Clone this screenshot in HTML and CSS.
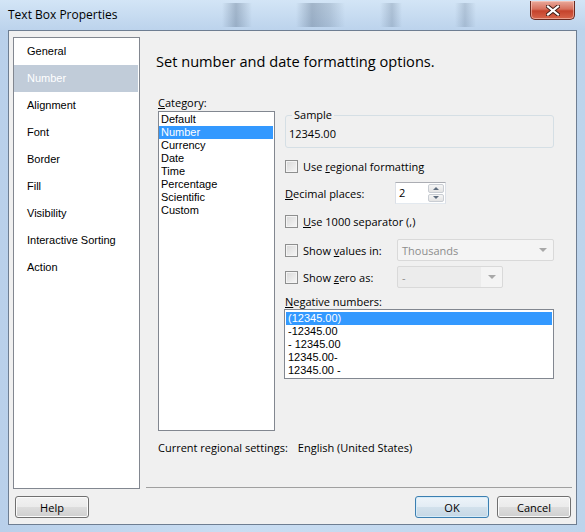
FILE: index.html
```html
<!DOCTYPE html>
<html lang="en">
<head>
  <meta charset="UTF-8" />
  <title>Text Box Properties</title>
  <link rel="stylesheet" href="styles.css">
</head>
<body>
  <div class="window">
    <div class="titlebar">
      <span class="title">Text Box Properties</span>
      <span class="close">
        <svg width="14" height="11" viewBox="0 0 14 11">
          <path d="M2 1.5 L12 9.5 M12 1.5 L2 9.5" stroke="#3b1a14" stroke-width="4" stroke-linecap="square"/>
          <path d="M2 1.5 L12 9.5 M12 1.5 L2 9.5" stroke="#fff" stroke-width="2.2" stroke-linecap="square"/>
        </svg>
      </span>
    </div>

    <div class="client">
      <div class="main">
        <ul class="nav">
          <li>General</li>
          <li class="selected">Number</li>
          <li>Alignment</li>
          <li>Font</li>
          <li>Border</li>
          <li>Fill</li>
          <li>Visibility</li>
          <li>Interactive Sorting</li>
          <li>Action</li>
        </ul>

        <div class="page">
          <h1>Set number and date formatting options.</h1>

          <div class="cols">
            <div class="cat">
              <div class="label"><u>C</u>ategory:</div>
              <ul class="list cat-list">
                <li>Default</li>
                <li class="selected">Number</li>
                <li>Currency</li>
                <li>Date</li>
                <li>Time</li>
                <li>Percentage</li>
                <li>Scientific</li>
                <li>Custom</li>
              </ul>
            </div>

            <div class="opts">
              <fieldset class="sample">
                <legend>Sample</legend>
                <div>12345.00</div>
              </fieldset>

              <div class="row r-regional">
                <span class="check"></span>
                <span>Use <u>r</u>egional formatting</span>
              </div>

              <div class="row r-decimal">
                <span class="field-label"><u>D</u>ecimal places:</span>
                <span class="spin">
                  <span class="spin-value">2</span>
                  <span class="spin-btns">
                    <span class="spin-btn"><i class="up"></i></span>
                    <span class="spin-btn"><i class="down"></i></span>
                  </span>
                </span>
              </div>

              <div class="row r-sep">
                <span class="check"></span>
                <span><u>U</u>se 1000 separator (,)</span>
              </div>

              <div class="row r-values">
                <span class="check"></span>
                <span class="check-label">Show <u>v</u>alues in:</span>
                <span class="combo combo-wide">
                  <span class="combo-text">Thousands</span>
                  <i class="down"></i>
                </span>
              </div>

              <div class="row r-zero">
                <span class="check"></span>
                <span class="check-label">Show <u>z</u>ero as:</span>
                <span class="combo combo-narrow">
                  <span class="combo-text">-</span>
                  <i class="down"></i>
                </span>
              </div>

              <div class="label neg-label"><u>N</u>egative numbers:</div>
              <ul class="list neg-list">
                <li class="selected">(12345.00)</li>
                <li>-12345.00</li>
                <li>- 12345.00</li>
                <li>12345.00-</li>
                <li>12345.00 -</li>
              </ul>
            </div>
          </div>

          <div class="regional">
            <span>Current regional settings:</span>
            <span>English (United States)</span>
          </div>

          <div class="separator"></div>
        </div>
      </div>

      <div class="footer">
        <button class="btn">Help</button>
        <span class="spacer"></span>
        <button class="btn btn-default">OK</button>
        <button class="btn">Cancel</button>
      </div>
    </div>
  </div>
</body>
</html>
```

FILE: styles.css
```css
body {
  margin: 0;
  width: 585px;
  height: 532px;
  overflow: hidden;
  font-family: 'Segoe UI', 'Open Sans', sans-serif;
  font-size: 11px;
  color: #000;
  background: #c2d7ee;
}

ul {
  margin: 0;
  padding: 0;
  list-style: none;
}

u {
  text-decoration: underline;
  text-underline-offset: 1px;
}

.window {
  display: flex;
  flex-direction: column;
  height: 532px;
  background: linear-gradient(to right, #b9d0ea, #c9ddf2 40%, #bdd4ec);
}

/* title bar, with the blurred windows behind the glass */
.titlebar {
  height: 30px;
  display: flex;
  align-items: flex-start;
  padding: 0 10px 0 8px;
  background:
    linear-gradient(to right,
      transparent 222px, rgba(70, 90, 115, 0.32) 236px, transparent 252px,
      transparent 296px, rgba(70, 90, 115, 0.34) 312px, rgba(70, 90, 115, 0.2) 330px, transparent 345px,
      transparent 380px, rgba(70, 90, 115, 0.24) 392px, transparent 402px,
      transparent 455px, rgba(70, 90, 115, 0.22) 465px, transparent 476px) 0 3px / 100% 24px no-repeat,
    linear-gradient(#d3e5f6, #bcd3ec);
}

.title {
  flex: 1;
  line-height: 30px;
  font-size: 12px;
  color: #000;
}

.close {
  width: 43px;
  height: 18px;
  margin-top: 1px;
  display: flex;
  align-items: center;
  justify-content: center;
  border: 1px solid #6a2a20;
  border-top: none;
  border-radius: 0 0 5px 5px;
  background: linear-gradient(#e9a99b, #d7705d 45%, #c5432c 55%, #d7654b);
  box-shadow: inset 0 0 0 1px rgba(255, 220, 210, 0.5);
}

.client {
  height: 493px;
  margin: 0 8px 7px;
  border: 1px solid #6e7e92;
  background: #f0f0f0;
  display: flex;
  flex-direction: column;
}

.main {
  display: flex;
  gap: 6px;
  padding: 6px 4px 0 4px;
}

/* left page list */
.nav {
  width: 125px;
  height: 450px;
  border: 1px solid #828790;
  background: #fff;
  font-family: 'Liberation Sans', Arial, sans-serif;
  font-size: 11px;
}

.nav li {
  height: 27px;
  line-height: 27px;
  padding-left: 13px;
}

.nav li.selected {
  margin-right: 1px;
  background: #c1ccd9;
  color: #fff;
}

.page {
  flex: 1;
  height: 452px;
  display: flex;
  flex-direction: column;
  padding-left: 10px;
}

h1 {
  margin: 14px 0 0;
  font-size: 14.6px;
  font-weight: normal;
  line-height: 20px;
}

.cols {
  display: flex;
  gap: 9px;
  margin-top: 24px;
  margin-left: 2px;
}

.label {
  line-height: 15px;
}

.cat {
  width: 117px;
}

.list {
  border: 1px solid #828790;
  background: #fff;
  font-family: 'Liberation Sans', Arial, sans-serif;
  font-size: 11px;
}

.list li {
  height: 13px;
  line-height: 13px;
  padding-left: 2px;
}

.list li.selected {
  background: #3399ff;
  color: #fff;
}

.cat-list {
  margin-top: 1px;
  height: 320px;
  padding: 1px 0 0 0;
  box-sizing: border-box;
}

.cat-list li {
  margin-right: 1px;
}

.opts {
  width: 270px;
}

.sample {
  margin: 12px 0 0 1px;
  padding: 3px 4px 6px 3px;
  border: 1px solid #d5dfe5;
  border-radius: 3px;
  width: 260px;
}

.sample legend {
  padding: 0 2px;
  margin-left: 3px;
  line-height: 16px;
}

.sample div {
  line-height: 15px;
}

.row {
  display: flex;
  align-items: center;
  margin-left: 1px;
}

.check {
  width: 11px;
  height: 11px;
  flex: none;
  margin-right: 5px;
  border: 1px solid #8e8f8f;
  background: linear-gradient(135deg, #d8d8d8, #f7f7f7);
  box-shadow: inset 0 0 0 1px #f4f4f4;
}

.r-regional { height: 14px; margin-top: 11px; }
.r-decimal  { height: 22px; margin-top: 9px; }
.r-sep      { height: 14px; margin-top: 10px; }
.r-values   { height: 22px; margin-top: 11px; }
.r-zero     { height: 22px; margin-top: 5px; }

.field-label {
  width: 110px;
}

.check-label {
  width: 94px;
}

.spin {
  width: 49px;
  height: 20px;
  display: flex;
  border: 1px solid #dbdfe6;
  border-top-color: #abadb3;
  border-bottom-color: #e3e9ef;
  background: #fff;
}

.spin-value {
  flex: 1;
  padding-left: 3px;
  line-height: 20px;
}

.spin-btns {
  width: 16px;
  display: flex;
  flex-direction: column;
  gap: 1px;
  padding: 1px 1px 1px 0;
}

.spin-btn {
  flex: 1;
  display: flex;
  align-items: center;
  justify-content: center;
  border: 1px solid #c9cdd3;
  border-radius: 2px;
  background: linear-gradient(#f5f5f5, #e4e4e4);
}

i.up, i.down {
  width: 0;
  height: 0;
  border-left: 3px solid transparent;
  border-right: 3px solid transparent;
}

i.up { border-bottom: 3px solid #5f6d7e; }
i.down { border-top: 3px solid #5f6d7e; }

.combo {
  height: 20px;
  display: flex;
  align-items: center;
  border: 1px solid #d9d9d9;
  border-radius: 2px;
  background: #f4f4f4;
  color: #8d8d8d;
}

.combo-text {
  flex: 1;
  padding-left: 4px;
}

.combo i.down {
  margin-right: 6px;
  border-top-color: #a8a8a8;
  border-left-width: 4px;
  border-right-width: 4px;
  border-top-width: 4px;
}

.combo-wide {
  width: 155px;
}

.combo-narrow {
  width: 104px;
  background: linear-gradient(to right, #ececec 83px, #f4f4f4 83px);
}

.neg-label {
  margin-top: 6px;
  margin-left: 1px;
}

.neg-list {
  height: 70px;
  box-sizing: border-box;
  padding: 2px 1px 0 1px;
}

.regional {
  margin-top: 9px;
  margin-left: 2px;
  line-height: 15px;
  display: flex;
  gap: 10px;
}

.separator {
  margin-top: auto;
  margin-left: -10px;
  margin-bottom: 1px;
  height: 1px;
  background: #a0a0a0;
}

.footer {
  display: flex;
  gap: 8px;
  padding: 7px 5px 0 6px;
}

.spacer {
  flex: 1;
}

.btn {
  width: 74px;
  height: 22px;
  padding: 0;
  font-family: inherit;
  font-size: 11px;
  color: #000;
  border: 1px solid #707070;
  border-radius: 3px;
  background: linear-gradient(#f2f2f2, #ebebeb 50%, #dddddd 50%, #cfcfcf);
  box-shadow: inset 0 0 0 1px #fbfbfb;
}

.btn-default {
  border-color: #3c7fb1;
  background: linear-gradient(#eef4f9, #e2ecf4 50%, #d2e1ec 50%, #c5d7e5);
  box-shadow: inset 0 0 0 1px #d6ecf9;
}
```
